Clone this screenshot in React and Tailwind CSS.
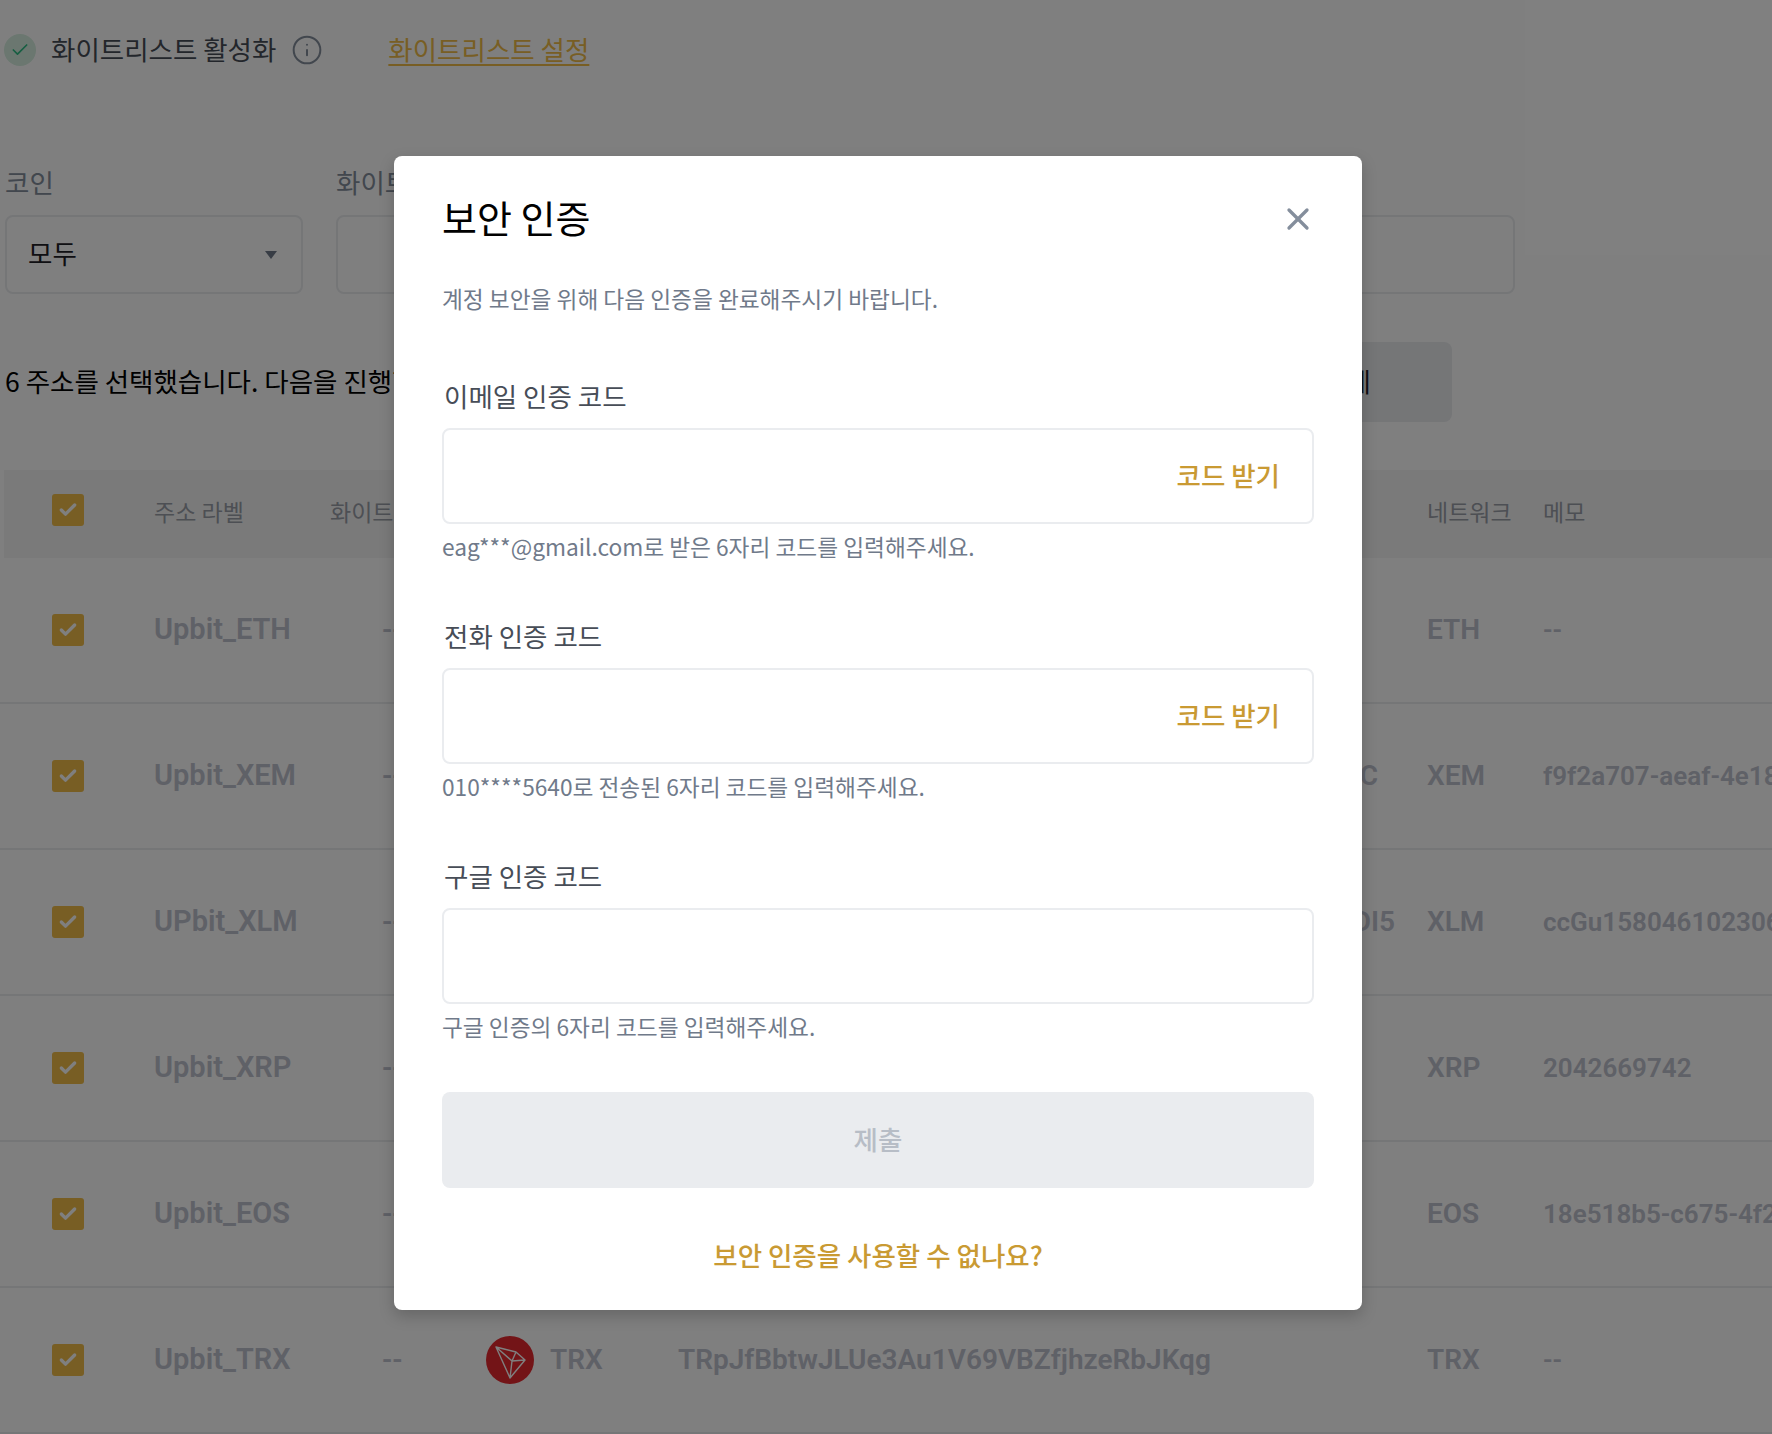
import React from 'react';
import { Check, X, Info } from 'lucide-react';

const KR = "font-['Noto_Sans_CJK_KR','Noto_Sans',sans-serif]";
const ROW = "h-[146px] border-b-2 border-[#eaecef] flex items-center pl-[52px] text-[28px] font-semibold text-[#bec2ce] whitespace-nowrap font-['Roboto',sans-serif]";

const rows = [
  { label: 'Upbit_ETH', net: 'ETH', memo: '--', addr: '', pad: '' },
  { label: 'Upbit_XEM', net: 'XEM', memo: 'f9f2a707-aeaf-4e18-b3c1', addr: 'C', pad: 'pr-[49px]' },
  { label: 'UPbit_XLM', net: 'XLM', memo: 'ccGu158046102306', addr: 'DI5', pad: 'pr-[32px]' },
  { label: 'Upbit_XRP', net: 'XRP', memo: '2042669742', addr: '', pad: '' },
  { label: 'Upbit_EOS', net: 'EOS', memo: '18e518b5-c675-4f2a-9d11', addr: '', pad: '' },
];

const Box = () => (
  <div className="w-8 h-8 rounded-[3px] bg-[#f0bc48] flex items-center justify-center shrink-0">
    <Check className="w-5 h-5 text-white" strokeWidth={4} />
  </div>
);

const TronIcon = () => (
  <svg viewBox="0 0 48 48" className="w-12 h-12 shrink-0">
    <circle cx="24" cy="24" r="24" fill="#e6282f" />
    <path d="M10 11 L30 16 L39 24 L24 42 Z M10 11 L26 25 L24 42 M26 25 L39 24 M26 25 L30 16" fill="none" stroke="#fff" strokeWidth="1.4" strokeLinejoin="round" />
  </svg>
);

const Row = ({ row }) => (
  <div className={ROW}>
    <Box />
    <div className="w-[298px] pl-[70px] shrink-0 text-[29px]">{row.label}</div>
    <div className={`w-[1045px] shrink-0 flex justify-between ${row.pad}`}>
      <span>--</span>
      <span>{row.addr}</span>
    </div>
    <div className="w-[116px] shrink-0">{row.net}</div>
    <div className="text-[26px]">{row.memo}</div>
  </div>
);

const Field = ({ label, hint, action }) => (
  <div>
    <div className="text-[26.5px] leading-[34px] text-[#474d57] pl-[2px] mb-[15px]">{label}</div>
    <div className="h-[96px] border-2 border-[#eaecef] rounded-[8px] flex items-center justify-end pr-[32px] pb-[3px]">
      {action && <span className="text-[26.5px] font-medium text-[#c99a33]">{action}</span>}
    </div>
    <div className="text-[22.7px] leading-[32px] text-[#707a8a] mt-[7px]">{hint}</div>
  </div>
);

export default function App() {
  return (
    <div className={`relative w-[1772px] h-[1434px] overflow-hidden bg-white ${KR}`}>
      {/* page behind the dialog */}
      <div className="h-[96px] flex items-center pl-[4px] pt-[4px]">
        <div className="w-8 h-8 rounded-full bg-[#d6efe0] flex items-center justify-center">
          <Check className="w-5 h-5 text-[#2ebd85]" strokeWidth={2} />
        </div>
        <span className="ml-[15px] text-[26.5px] text-[#474d57] pb-[2px]">화이트리스트 활성화</span>
        <Info className="ml-[15px] w-8 h-8 text-[#848e9c]" strokeWidth={1.5} />
        <span className="ml-[65px] text-[26.5px] text-[#f0bc48] underline underline-offset-4 pb-[2px]">화이트리스트 설정</span>
      </div>

      <div className="flex pl-[5px] mt-[68px] gap-[33px]">
        <div className="w-[298px]">
          <div className="text-[26.5px] leading-[36px] text-[#848e9c] mb-[15px]">코인</div>
          <div className="h-[79px] border-2 border-[#eaecef] rounded-[8px] flex items-center justify-between pl-[21px] pr-[24px] pb-[3px] text-[26.5px] text-[#1e2026]">
            모두
            <span className="w-0 h-0 mt-[3px] border-l-[6px] border-r-[6px] border-t-[8px] border-l-transparent border-r-transparent border-t-[#707a8a]" />
          </div>
        </div>
        <div className="w-[1179px]">
          <div className="text-[26.5px] leading-[36px] text-[#848e9c] mb-[15px]">화이트리스트</div>
          <div className="h-[79px] border-2 border-[#eaecef] rounded-[8px]" />
        </div>
      </div>

      <div className="flex items-center justify-between h-[80px] mt-[48px] pl-[5px] pr-[320px]">
        <span className="text-[26.5px] text-[#000] pb-[3px]">6 주소를 선택했습니다. 다음을 진행합니다</span>
        <div className="w-[220px] h-[80px] rounded-[8px] bg-[#eaecef] flex items-center justify-end pr-[81px] pb-[3px] text-[26.5px] text-[#1e2026]">삭제</div>
      </div>

      <div className="mt-[48px] ml-[4px] h-[88px] bg-[#f5f5f5] flex items-center pl-[48px] pb-[8px] text-[23px] text-[#9a9fa9] whitespace-nowrap">
        <Box />
        <div className="w-[246px] pl-[70px] pt-[3px] shrink-0">주소 라벨</div>
        <div className="w-[1097px] pt-[3px] shrink-0">화이트리스트</div>
        <div className="w-[116px] pt-[3px] shrink-0">네트워크</div>
        <div className="pt-[3px]">메모</div>
      </div>

      {rows.map((r) => <Row key={r.label} row={r} />)}

      <div className={ROW}>
        <Box />
        <div className="w-[298px] pl-[70px] shrink-0 text-[29px]">Upbit_TRX</div>
        <span className="w-[104px] shrink-0">--</span>
        <TronIcon />
        <span className="w-[144px] pl-[16px] shrink-0">TRX</span>
        <span className="w-[749px] shrink-0">TRpJfBbtwJLUe3Au1V69VBZfjhzeRbJKqg</span>
        <div className="w-[116px] shrink-0">TRX</div>
        <div className="text-[26px]">--</div>
      </div>

      {/* dim layer */}
      <div className="absolute inset-0 bg-black/50" />

      {/* dialog */}
      <div className="absolute left-[394px] top-[156px] w-[968px] h-[1154px] bg-white rounded-[8px] shadow-[0_6px_16px_rgba(0,0,0,0.2)] px-[48px] pt-[35px]">
        <div className="flex items-center justify-between h-[50px]">
          <span className="text-[38px] text-[#000]">보안 인증</span>
          <X className="w-9 h-9 text-[#848e9c] mr-[-2px] mt-[5px]" strokeWidth={2.2} />
        </div>
        <div className="text-[22.7px] leading-[32px] text-[#707a8a] mt-[42px] mb-[64px]">계정 보안을 위해 다음 인증을 완료해주시기 바랍니다.</div>
        <div className="space-y-[56px]">
          <Field label="이메일 인증 코드" hint="eag***@gmail.com로 받은 6자리 코드를 입력해주세요." action="코드 받기" />
          <Field label="전화 인증 코드" hint="010****5640로 전송된 6자리 코드를 입력해주세요." action="코드 받기" />
          <Field label="구글 인증 코드" hint="구글 인증의 6자리 코드를 입력해주세요." />
        </div>
        <div className="h-[96px] mt-[49px] pb-[2px] rounded-[8px] bg-[#eaecef] flex items-center justify-center text-[26.5px] font-medium text-[#b7bdc6]">제출</div>
        <div className="mt-[49px] leading-[36px] text-center text-[26.5px] font-medium text-[#c99a33]">보안 인증을 사용할 수 없나요?</div>
      </div>
    </div>
  );
}
